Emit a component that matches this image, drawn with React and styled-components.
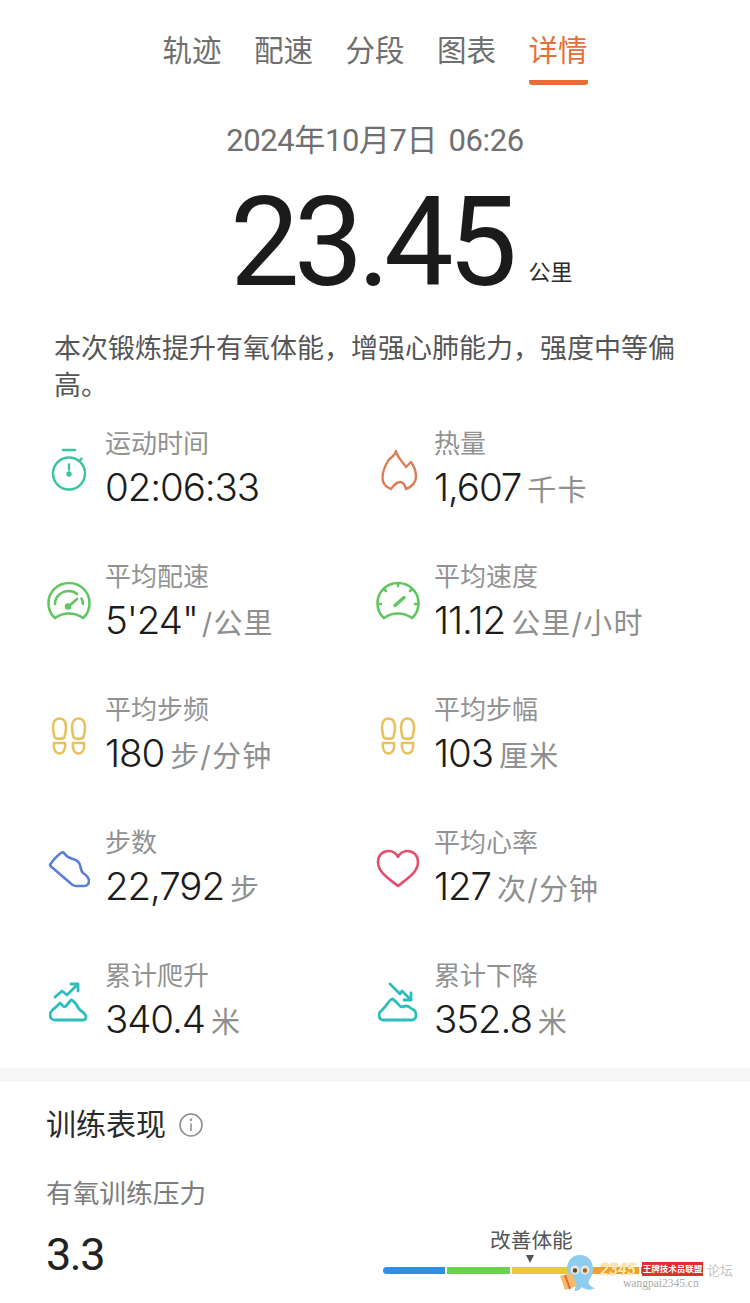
import React from 'react'
import styled, { createGlobalStyle } from 'styled-components'

const GlobalStyle = createGlobalStyle`
    html, body { margin: 0; padding: 0; background: #fff; }
    body { font-family: Roboto, "Noto Sans CJK SC", sans-serif; }
`;

const tabs = ['轨迹', '配速', '分段', '图表', '详情'];

const Stopwatch = () => (
    <svg width="42" height="48" viewBox="0 0 42 48" fill="none" stroke="#3cc3a0" strokeWidth="2.4" strokeLinecap="round">
        <path d="M15 4h12" />
        <circle cx="21" cy="27.500" r="16" />
        <path d="M33.500 12.500l-1.500 2" />
        <path d="M21 18.500v5" />
        <circle cx="21" cy="28" r="1.500" fill="#3cc3a0" />
    </svg>
);
const Flame = () => (
    <svg width="42" height="48" viewBox="0 0 42 48" fill="none" stroke="#dd7d55" strokeWidth="2.4" strokeLinejoin="round">
        <path d="M19 5c1 6 6 10 10 16 1-1 3-3 5-5 3 4 5 9 5 15 0 5-4 10-10 12-1-4-3-7-6-7s-6 3-9 7C9 41 5.500 37 5.500 32c0-7 3-13 6-18 3-3 7-5 7.500-9z" />
    </svg>
);
const PaceGauge = () => (
    <svg width="44" height="44" viewBox="0 0 44 44" fill="none" stroke="#62c562" strokeWidth="2.6" strokeLinecap="round">
        <path d="M8 37C3 33 1.500 27 1.500 22 1.500 11 10.500 2 22 2s20.500 9 20.500 20c0 5-1.500 11-6.500 15-8-6-20-6-28 0z" />
        <path d="M8 23c0-8 7-13 14-13 3 0 6 1 8 3" />
        <path d="M36 23c0-2-.5-4-1.500-5.500" />
        <path d="M22 25l8-7" />
        <circle cx="21" cy="25.500" r="2" fill="#62c562" />
    </svg>
);
const SpeedGauge = () => (
    <svg width="44" height="44" viewBox="0 0 44 44" fill="none" stroke="#62c562" strokeWidth="2.6" strokeLinecap="round">
        <path d="M8 37C3 33 1.500 27 1.500 22 1.500 11 10.500 2 22 2s20.500 9 20.500 20c0 5-1.500 11-6.500 15-8-6-20-6-28 0z" />
        <path d="M22 2v3M8 8l2 2M36 8l-2 2M2 23h3M42 23h-3" />
        <path d="M19 24.500l9-8" strokeWidth="3.400" />
    </svg>
);
const Steps = () => (
    <svg width="38" height="38" viewBox="0 0 38 38" fill="none" stroke="#e8c25e" strokeWidth="2.6">
        <path d="M3 10.500C3 5 5 1.500 9.500 1.500S16 5 16 10.500c0 4-1 7-1.500 9.500-1 2.500-9 2.500-10 0C4 17.500 3 14.500 3 10.500z" />
        <path d="M4 26h11c1 6-1.500 10.500-5.500 10.500S3 32 4 26z" />
        <path d="M22 10.500c0-5.500 2-9 6.500-9S35 5 35 10.500c0 4-1 7-1.500 9.500-1 2.500-9 2.500-10 0C23 17.500 22 14.500 22 10.500z" />
        <path d="M23 26h11c1 6-1.500 10.500-5.500 10.500S22 32 23 26z" />
    </svg>
);
const Shoe = () => (
    <svg width="42" height="40" viewBox="0 0 42 40" fill="none" stroke="#5a7fd6" strokeWidth="2.600" strokeLinejoin="round">
        <path d="M2.500 15C6 10 10 6 13 4Q15 2.500 16.500 4.500C18 7 21 9 25 10 29 11 31 12.500 32 16 33 20 33 22 35 24 38 26 41 28 41 32 41 35 39 37 36 37L28 37Q26 37 24 35.500L3 17.500Q1.500 16 2.500 15z" />
    </svg>
);
const Heart = () => (
    <svg width="44" height="40" viewBox="0 0 44 40" fill="none" stroke="#e2506e" strokeWidth="2.600" strokeLinejoin="round">
        <path d="M22 37C12 29 2 23 2 13 2 6 7 2 12.500 2 16.500 2 20 4 22 8c2-4 5.500-6 9.500-6C37 2 42 6 42 13c0 10-10 16-20 24z" />
    </svg>
);
const Climb = () => (
    <svg width="40" height="40" viewBox="0 0 40 40" fill="none" stroke="#2dbdbd" strokeWidth="2.800" strokeLinecap="round" strokeLinejoin="round">
        <path d="M6 38C2 38 1 35 1 33c0-3 3-6 5-7l5-5 3 3c1 1 2 1 3 0l5-6c2 0 3 2 5 4 1 2 2 4 4 6 3 2 6 4 6 7 0 2-1 3-3 3z" />
        <path d="M6 15l7-6 5 4 10-10" />
        <path d="M22 2h7v7" />
    </svg>
);
const Descent = () => (
    <svg width="40" height="40" viewBox="0 0 40 40" fill="none" stroke="#2dbdbd" strokeWidth="2.800" strokeLinecap="round" strokeLinejoin="round">
        <path d="M5 38C2 38 1 35 1 33c0-3 3-5 5-7 3-3 5-8 8-9 2 0 5 4 8 7 2 2 4 0 6 0 3 0 4 2 6 3 3 1 4 3 4 6 0 3-2 5-4 5z" />
        <path d="M12 2l10 10 2-3 9 9" />
        <path d="M33 11v7h-7" />
    </svg>
);

const stats = [
    { icon: <Stopwatch />, label: '运动时间', value: '02:06:33' },
    { icon: <Flame />, label: '热量', value: '1,607', unit: '千卡' },
    { icon: <PaceGauge />, label: '平均配速', value: `5'24"`, unit: '/公里', tight: true },
    { icon: <SpeedGauge />, label: '平均速度', value: '11.12', unit: '公里/小时' },
    { icon: <Steps />, label: '平均步频', value: '180', unit: '步/分钟' },
    { icon: <Steps />, label: '平均步幅', value: '103', unit: '厘米' },
    { icon: <Shoe />, label: '步数', value: '22,792', unit: '步' },
    { icon: <Heart />, label: '平均心率', value: '127', unit: '次/分钟' },
    { icon: <Climb />, label: '累计爬升', value: '340.4', unit: '米' },
    { icon: <Descent />, label: '累计下降', value: '352.8', unit: '米' },
];

const segments = ['#2f8fe8', '#6bd24e', '#e9c935', '#f0a030', '#e8503f'];

const Octopus = () => (
    <svg width="40" height="38" viewBox="0 0 40 38">
        <path d="M23 1c8 0 13 6 13 14 0 6-3 9-4 12-1 3 2 6 6 7-5 3-10 2-13-1-2 3-5 4-8 4 2-3 2-6 0-10-3-4-7-7-7-12C10 7 15 1 23 1z" fill="#8fcdf0" />
        <circle cx="18" cy="16" r="4.500" fill="#e6e6dc" />
        <circle cx="28" cy="16" r="4.500" fill="#e6e6dc" />
        <circle cx="18" cy="16.500" r="2.200" fill="#5b4630" />
        <circle cx="28" cy="16.500" r="2.200" fill="#a8641f" />
        <path d="M3 22l12-3 5 13-12 4z" fill="#f4bc68" />
        <path d="M8 21l5 14" stroke="#e8623f" strokeWidth="2" />
    </svg>
);

export default function App() {
    return (
        <Page>
            <GlobalStyle />
            <Tabs>
                {tabs.map((t, i) =>
                    <Tab key={t} active={i === tabs.length - 1}>{t}</Tab>
                )}
            </Tabs>
            <DateLine>2024年10月7日 06:26</DateLine>
            <Distance>
                <BigNumber>23.45</BigNumber>
                <BigUnit>公里</BigUnit>
            </Distance>
            <Summary>本次锻炼提升有氧体能，增强心肺能力，强度中等偏高。</Summary>
            <StatGrid>
                {stats.map(s =>
                    <Stat key={s.label}>
                        <IconSlot>{s.icon}</IconSlot>
                        <div>
                            <StatLabel>{s.label}</StatLabel>
                            <StatValue>
                                {s.value}
                                {s.unit && <StatUnit tight={s.tight}>{s.unit}</StatUnit>}
                            </StatValue>
                        </div>
                    </Stat>
                )}
            </StatGrid>
            <Divider />
            <Section>
                <SectionTitle>
                    训练表现
                    <InfoIcon viewBox="0 0 24 24" fill="none" stroke="#8a8a8a" strokeWidth="1.500">
                        <circle cx="12" cy="12" r="11" />
                        <path d="M12 10.500v7.500" />
                        <circle cx="12" cy="6.800" r="0.500" />
                    </InfoIcon>
                </SectionTitle>
                <MetricLabel>有氧训练压力</MetricLabel>
                <MetricRow>
                    <MetricValue>3.3</MetricValue>
                    <Scale>
                        <ScaleLabel>改善体能</ScaleLabel>
                        <Pointer />
                        <Bar>
                            {segments.map(c => <Segment key={c} color={c} />)}
                        </Bar>
                    </Scale>
                </MetricRow>
            </Section>
            <Watermark>
                <Octopus />
                <WatermarkText>
                    <WatermarkBrand>
                        <BrandNumber>2345</BrandNumber>
                        <BrandName>王牌技术员联盟</BrandName>
                        <BrandTail>论坛</BrandTail>
                    </WatermarkBrand>
                    <WatermarkUrl>wangpai2345.cn</WatermarkUrl>
                </WatermarkText>
            </Watermark>
        </Page>
    );
}

const Page = styled.div`
    position: relative;
    width: 750px;
    height: 1303px;
    overflow: hidden;
    background: #fff;
`;

const Tabs = styled.div`
    display: flex;
    justify-content: center;
    gap: 32.500px;
    padding-top: 29px;
`;

const Tab = styled.div`
    position: relative;
    height: 56px;
    font-size: 29.500px;
    line-height: 44px;
    color: ${({active}) => active ? '#e66f37' : '#6f6f6f'};
    border-bottom: 5px solid ${({active}) => active ? '#e66f37' : 'transparent'};
    border-radius: 0 0 3px 3px;
    box-sizing: border-box;
`;

const DateLine = styled.div`
    margin-top: 36px;
    text-align: center;
    font-size: 31px;
    line-height: 40px;
    letter-spacing: -0.4px;
    word-spacing: 4px;
    color: #707070;
`;

const Distance = styled.div`
    display: flex;
    align-items: flex-end;
    padding-left: 230px;
    height: 157px;
`;

const BigNumber = styled.div`
    font-size: 124px;
    line-height: 150px;
    letter-spacing: -6px;
    color: #1b1b1b;
`;

const BigUnit = styled.div`
    font-size: 22px;
    line-height: 30px;
    margin-left: 17px;
    margin-bottom: 30px;
    color: #2a2a2a;
`;

const Summary = styled.p`
    margin: 13px 0 0;
    padding: 0 54px;
    font-size: 27px;
    line-height: 37px;
    color: #555;
`;

const StatGrid = styled.div`
    display: grid;
    grid-template-columns: 329px 329px;
    grid-auto-rows: 133px;
    padding-left: 47px;
    margin-top: 21px;
`;

const Stat = styled.div`
    display: flex;
    align-items: flex-start;
`;

const IconSlot = styled.div`
    width: 44px;
    height: 88px;
    margin-right: 14px;
    display: flex;
    align-items: center;
    justify-content: center;
`;

const StatLabel = styled.div`
    font-size: 26px;
    line-height: 36px;
    color: #929292;
`;

const StatValue = styled.div`
    font-family: Inter, "Noto Sans CJK SC", sans-serif;
    font-size: 38.500px;
    font-weight: 350;
    line-height: 50px;
    letter-spacing: -1.100px;
    color: #1c1c1c;
    white-space: nowrap;
`;

const StatUnit = styled.span`
    font-size: 29px;
    font-weight: 400;
    letter-spacing: 1.200px;
    margin-left: ${({tight}) => tight ? '4px' : '6px'};
    color: #8f8f8f;
`;

const Divider = styled.div`
    height: 14px;
    margin-top: -23px;
    background: #f6f6f6;
`;

const Section = styled.div`
    padding: 22px 0 0 46px;
`;

const SectionTitle = styled.div`
    display: flex;
    align-items: center;
    font-size: 30px;
    line-height: 42px;
    color: #2b2b2b;
`;

const InfoIcon = styled.svg`
    width: 24px;
    height: 24px;
    margin-left: 13px;
`;

const MetricLabel = styled.div`
    margin-top: 29px;
    font-size: 26.700px;
    line-height: 38px;
    color: #7d7d7d;
`;

const MetricRow = styled.div`
    display: flex;
    justify-content: space-between;
    margin-top: 12px;
`;

const MetricValue = styled.div`
    font-size: 45px;
    line-height: 60px;
    letter-spacing: -1.500px;
    color: #222;
`;

const Scale = styled.div`
    position: relative;
    width: 367px;
`;

const ScaleLabel = styled.div`
    position: absolute;
    left: 107px;
    top: 1px;
    font-size: 20.700px;
    line-height: 30px;
    color: #555;
`;

const Pointer = styled.div`
    position: absolute;
    left: 143px;
    top: 30px;
    width: 0;
    height: 0;
    border-left: 4px solid transparent;
    border-right: 4px solid transparent;
    border-top: 8px solid #555;
`;

const Bar = styled.div`
    position: absolute;
    left: 0;
    top: 42px;
    display: flex;
    gap: 2px;
    width: 320px;
    height: 7px;
    border-radius: 4px;
    overflow: hidden;
`;

const Segment = styled.div`
    flex: 1;
    background: ${({color}) => color};
`;

const Watermark = styled.div`
    position: absolute;
    left: 557px;
    top: 1254px;
    display: flex;
    align-items: flex-start;
`;

const WatermarkText = styled.div`
    margin-left: 3px;
    margin-top: 7px;
`;

const WatermarkBrand = styled.div`
    display: flex;
    align-items: center;
    height: 16px;
    font-weight: 700;
    white-space: nowrap;
`;

const BrandNumber = styled.span`
    width: 42px;
    font-size: 16px;
    font-style: italic;
    color: #ffe9a8;
    text-shadow: 0 0 1px #c9802a;
`;

const BrandName = styled.span`
    width: 61px;
    margin-right: 4px;
    font-size: 8.500px;
    color: #fff;
    background: #d8322e;
    line-height: 14px;
    text-align: center;
`;

const BrandTail = styled.span`
    font-size: 13px;
    font-weight: 400;
    color: #c4c4c4;
`;

const WatermarkUrl = styled.div`
    margin-left: 23px;
    font-family: "Liberation Serif", serif;
    font-size: 11.500px;
    line-height: 14px;
    margin-top: -1px;
    color: #aaa;
`;
